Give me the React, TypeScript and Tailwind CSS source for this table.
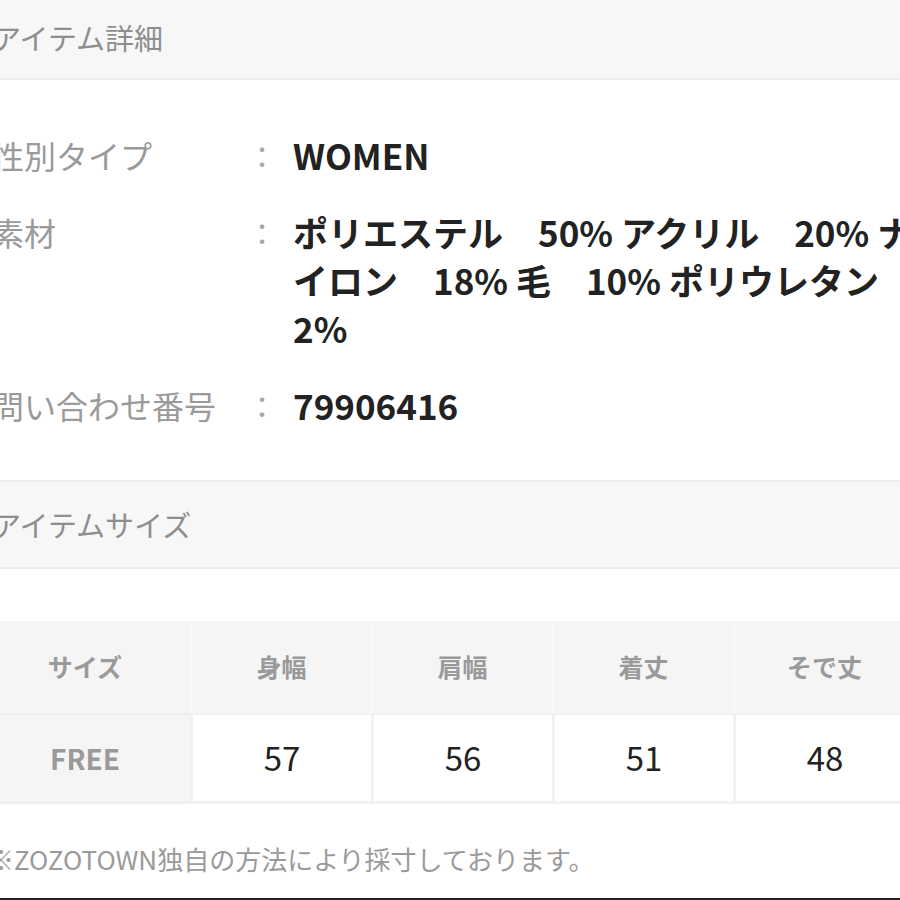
import React from "react";

const font = { fontFamily: '"Noto Sans CJK JP", "Noto Sans", sans-serif' };

function Row({ label, children }: { label: string; children: React.ReactNode }) {
  return (
    <div className="grid grid-cols-[239px_30px_1fr] gap-x-[16px] leading-[48px]">
      <div className="text-[32px] text-[#9a9a9a] whitespace-nowrap">{label}</div>
      <div className="text-[30px] text-[#a8a8a8]">：</div>
      <div className="text-[35px] text-[#222] font-semibold whitespace-nowrap">{children}</div>
    </div>
  );
}

export default function App() {
  const cols = ["身幅", "肩幅", "着丈", "そで丈"];
  const vals = ["57", "56", "51", "48"];
  return (
    <div className="w-[900px] h-[900px] overflow-hidden bg-white relative" style={font}>
      <div className="w-[931px] ml-[-8px] flex flex-col">
        <div className="h-[80px] bg-[#f7f7f7] border-b-2 border-[#ececec] flex items-center pb-[4px]">
          <span className="text-[29px] leading-none text-[#8e8e8e]">アイテム詳細</span>
        </div>
        <div className="pt-[51px] pb-[51px] flex flex-col gap-[29px]">
          <Row label="性別タイプ">WOMEN</Row>
          <Row label="素材">
            <div>ポリエステル　50% アクリル　20% ナ</div>
            <div>イロン　18% 毛　10% ポリウレタン</div>
            <div>2%</div>
          </Row>
          <Row label="問い合わせ番号">79906416</Row>
        </div>
        <div className="h-[89px] bg-[#f7f7f7] border-t-2 border-b-2 border-[#ececec] flex items-center">
          <span className="text-[29px] leading-none text-[#8e8e8e]">アイテムサイズ</span>
        </div>
        <div className="h-[52px]" />
        <div className="ml-[-12px] grid grid-cols-[210px_181px_181px_181px_181px]">
          <div className="h-[92px] bg-[#f5f5f5] flex items-center justify-center text-[25px] font-bold text-[#9a9a9a]">
            サイズ
          </div>
          {cols.map((c) => (
            <div
              key={c}
              className="h-[92px] bg-[#f5f5f5] border-l-2 border-[#f9f9f9] flex items-center justify-center text-[25px] font-bold text-[#9a9a9a]"
            >
              {c}
            </div>
          ))}
          <div className="h-[91px] bg-[#f5f5f5] border-t-2 border-b-[3px] border-[#eeeeee] flex items-center justify-center text-[28px] font-bold text-[#9a9a9a]">
            FREE
          </div>
          {vals.map((v) => (
            <div
              key={v}
              className="h-[91px] bg-white border-l-[3px] border-t-2 border-b-[3px] border-[#f1f1f1] flex items-center justify-center text-[33px] text-[#222]"
            >
              {v}
            </div>
          ))}
        </div>
        <div className="pt-[37px] ml-[-4px] text-[26px] leading-[36px] text-[#9a9a9a] whitespace-nowrap">
          ※ZOZOTOWN独自の方法により採寸しております。
        </div>
      </div>
      <div className="absolute left-0 right-0 bottom-0 h-[2px] bg-[#222]" />
    </div>
  );
}
